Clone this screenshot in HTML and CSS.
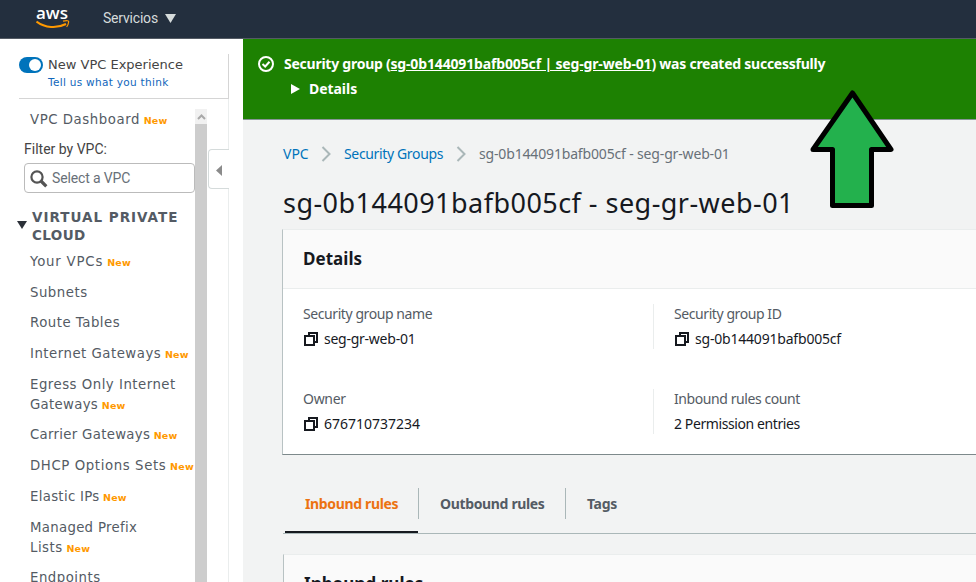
FILE: index.html
```html
<!DOCTYPE html>
<html lang="es">
<head>
<meta charset="utf-8">
<title>VPC - Security Groups</title>
<link rel="stylesheet" href="styles.css">
</head>
<body>
<header class="topbar">
  <div class="logo"><span>aws</span>
    <svg width="34" height="9" viewBox="0 0 34 9"><path d="M.5 1.500C9 8 21 8.600 30 4" fill="none" stroke="#f90" stroke-width="2"/><path d="M27 1.200C31 .2 33 .6 32.600 2.200C32.400 4 31.800 5.400 30.600 6.800" fill="none" stroke="#f90" stroke-width="1.200"/></svg>
  </div>
  <span class="services">Servicios</span>
  <svg class="caret" width="11" height="9" viewBox="0 0 11 9"><path d="M0 0H11L5.500 9Z" fill="#d5dbdb"/></svg>
</header>
<div class="shell">
  <aside class="sidebar">
    <div class="experience">
      <span class="toggle"></span>
      <div><div class="exp-title">New VPC Experience</div><div class="exp-link">Tell us what you think</div></div>
    </div>
    <div class="navwrap">
      <nav class="nav">
        <div class="item dash">VPC Dashboard <b>New</b></div>
        <div class="filter">Filter by VPC:</div>
        <div class="select"><svg width="18" height="18" viewBox="0 0 18 18" fill="none" stroke="#545454"><circle cx="7" cy="7" r="5.600" stroke-width="2.200"/><path d="M11 11L16.300 16.300" stroke-width="3.200"/></svg><span>Select a VPC</span></div>
        <div class="group"><svg width="10" height="8" viewBox="0 0 10 8"><path d="M0 0H10L5 8Z" fill="#2b3038"/></svg><div><div class="g1">VIRTUAL PRIVATE</div><div class="g2">CLOUD</div></div></div>
        <div class="items">
          <div class="item wide">Your VPCs <b>New</b></div>
          <div class="item">Subnets</div>
          <div class="item">Route Tables</div>
          <div class="item">Internet Gateways <b>New</b></div>
          <div class="item">Egress Only Internet<br><span class="snug">Gateways</span> <b>New</b></div>
          <div class="item snug">Carrier Gateways <b>New</b></div>
          <div class="item dhcp">DHCP Options Sets <b>New</b></div>
          <div class="item snug">Elastic IPs <b>New</b></div>
          <div class="item"><span class="snug">Managed Prefix</span><br>Lists <b>New</b></div>
          <div class="item">Endpoints</div>
        </div>
      </nav>
      <div class="scroll"><div class="up"><svg width="9" height="6" viewBox="0 0 9 6"><path d="M1 5L4.500 1.500L8 5" fill="none" stroke="#a9a9a9" stroke-width="2"/></svg></div></div>
      <div class="rail"><div class="collapse"><svg width="6" height="11" viewBox="0 0 6 11"><path d="M6 0V11L0 5.500Z" fill="#8b8b8b"/></svg></div></div>
    </div>
  </aside>
  <main class="main">
    <section class="flash">
      <svg class="ok" width="16" height="16" viewBox="0 0 16 16" fill="none" stroke="#fff" stroke-width="2"><circle cx="8" cy="8" r="7"/><path d="M4.500 8L7.200 10.500L11.500 5.800"/></svg>
      <div>
        <div class="msg">Security group (<u>sg-0b144091bafb005cf | seg-gr-web-01</u>) was created successfully</div>
        <div class="more"><svg width="9" height="10" viewBox="0 0 9 10"><path d="M0 0L9 5L0 10Z" fill="#fff"/></svg><span>Details</span></div>
      </div>
    </section>
    <div class="crumbs">
      <span class="c1">VPC</span>
      <svg width="10" height="16" viewBox="0 0 10 16"><path d="M1.500 1L8.500 8L1.500 15" fill="none" stroke="#aab7b8" stroke-width="2"/></svg>
      <span class="c2">Security Groups</span>
      <svg width="10" height="16" viewBox="0 0 10 16"><path d="M1.500 1L8.500 8L1.500 15" fill="none" stroke="#aab7b8" stroke-width="2"/></svg>
      <span class="c3">sg-0b144091bafb005cf - seg-gr-web-01</span>
    </div>
    <h1>sg-0b144091bafb005cf - seg-gr-web-01</h1>
    <section class="card">
      <h2>Details</h2>
      <div class="grid">
        <div class="cell"><div class="label">Security group name</div><div class="value"><svg width="14" height="14" viewBox="0 0 14 14" fill="none" stroke="#16191f" stroke-width="2"><path d="M1 4H10V13H1Z"/><path d="M5 4V1H13V10H10"/></svg><span class="v1">seg-gr-web-01</span></div></div>
        <div class="cell"><div class="label">Security group ID</div><div class="value"><svg width="14" height="14" viewBox="0 0 14 14" fill="none" stroke="#16191f" stroke-width="2"><path d="M1 4H10V13H1Z"/><path d="M5 4V1H13V10H10"/></svg><span class="v2">sg-0b144091bafb005cf</span></div></div>
        <div class="cell"><div class="label owner">Owner</div><div class="value"><svg width="14" height="14" viewBox="0 0 14 14" fill="none" stroke="#16191f" stroke-width="2"><path d="M1 4H10V13H1Z"/><path d="M5 4V1H13V10H10"/></svg><span>676710737234</span></div></div>
        <div class="cell"><div class="label">Inbound rules count</div><div class="value"><span class="v4">2 Permission entries</span></div></div>
      </div>
    </section>
    <div class="tabs"><div class="tab active">Inbound rules</div><div class="tab out">Outbound rules</div><div class="tab tags">Tags</div></div>
    <section class="card rules"><h2>Inbound rules</h2></section>
  </main>
</div>
<svg class="pointer" width="88" height="122" viewBox="0 0 88 122"><path d="M44.500 5L83 61.500H63.500V117.500H24.500V61.500H5Z" fill="#23b14d" stroke="#000" stroke-width="5" stroke-linejoin="round"/></svg>
</body>
</html>
```
FILE: styles.css
```css
* { box-sizing: border-box; }
html { overflow: hidden; }
body { margin: 0; width: 976px; height: 582px; overflow: hidden; background: #f2f3f3; color: #16191f; font: 14px/20px "Noto Sans", sans-serif; }
svg { display: block; flex: none; }
.topbar { height: 39px; display: flex; align-items: flex-start; background: #232f3e; border-bottom: 1px solid #545b64; color: #d5dbdb; padding-left: 36px; }
.logo { width: 34px; margin-right: 33px; }
.logo span { display: block; height: 20px; color: #fff; font: 600 17px/25px "Open Sans", sans-serif; }
.services { width: 62px; font: 14px/20px Roboto, sans-serif; letter-spacing: -.2px; margin-top: 8px; white-space: nowrap; }
.caret { margin: 14px 0 0; }
.shell { display: flex; height: 543px; overflow: hidden; }
.sidebar { width: 243px; flex: none; background: #fff; }
.experience { display: flex; width: 210px; height: 45px; margin: 15px 0 0 19px; border-right: 1px solid #d5d5d5; border-bottom: 1px solid #d5d5d5; font-family: "DejaVu Sans", sans-serif; white-space: nowrap; }
.toggle { width: 24px; height: 16px; margin: 3px 5px 0 0; padding: 2px 2px 2px 10px; border-radius: 8px; background: #0073bb; }
.toggle::before { content: ""; display: block; width: 12px; height: 12px; border-radius: 6px; background: #fff; }
.exp-title { font-size: 13px; line-height: 21px; color: #444; }
.exp-link { font-size: 10.5px; line-height: 14px; letter-spacing: .3px; color: #1166bb; }
.navwrap { display: flex; height: 483px; }
.nav { width: 195px; padding-top: 10px; overflow: hidden; }
.item { margin-left: 30px; font: 13.3px/20px "DejaVu Sans", sans-serif; letter-spacing: .5px; color: #545b64; white-space: nowrap; }
.item b { color: #f90; font-size: 9.5px; line-height: 1; letter-spacing: .2px; margin-left: -1px; }
.dash { padding-top: 1px; letter-spacing: .55px; }
.wide { letter-spacing: .8px; }
.snug { letter-spacing: .3px; }
.dhcp { letter-spacing: .6px; }
.filter { margin: 9px 0 0 24px; font: 14px/20px Roboto, sans-serif; color: #444; }
.select { display: flex; gap: 4px; width: 171px; height: 30px; margin: 4px 0 0 24px; padding: 6px 5px; border: 1px solid #bbb; border-radius: 4px; font: 14px/17px Roboto, sans-serif; letter-spacing: -.15px; color: #687078; }
.group { display: flex; gap: 5px; margin: 15px 0 8px 17px; font: bold 13.5px/18px "DejaVu Sans", sans-serif; letter-spacing: 1px; color: #545b64; white-space: nowrap; }
.g2 { letter-spacing: .4px; }
.group svg { margin-top: 13px; }
.items { display: grid; gap: 10.7px; }
.scroll { width: 12px; margin-top: 10px; background: #cdcdcd; }
.up { height: 15px; background: #f1f1f1; display: grid; place-items: center; }
.rail { width: 22px; border-right: 1px solid #eaeded; padding-top: 50px; }
.collapse { width: 21px; height: 40px; margin-left: 1px; border: 1px solid #d5dbdb; border-right: 0; border-radius: 4px 0 0 4px; padding: 15px 0 0 7px; background: #fff; }
.main { flex: 1; min-width: 0; }
.flash { height: 81px; display: flex; padding: 17px 0 0 15px; gap: 10px; background: #1d8102; border-bottom: 1px solid #879596; color: #fff; font-weight: bold; line-height: 16px; letter-spacing: -.25px; white-space: nowrap; }
.msg u { letter-spacing: -.15px; }
.more { display: flex; align-items: center; gap: 9px; margin: 9px 0 0 7px; letter-spacing: -.05px; }
.crumbs { display: flex; align-items: center; height: 20px; margin: 24px 0 0 40px; gap: 12px; color: #687078; white-space: nowrap; }
.c1, .c2 { color: #0073bb; }
.c1 { width: 26px; }
.c2 { width: 100px; margin-left: 1px; letter-spacing: -.35px; }
.c3 { letter-spacing: -.16px; margin-left: 1px; }
h1 { margin: 22px 0 0 40px; font-size: 27px; line-height: 34px; letter-spacing: .46px; font-weight: normal; white-space: nowrap; }
.card { margin: 9px 0 0 39px; width: 700px; height: 226px; background: #fff; border: 1px solid #eaeded; border-left-color: #b8c2c3; border-bottom-color: #7d898b; }
h2 { margin: 0; height: 59px; padding-left: 20px; background: #fafafa; border-bottom: 1px solid #eaeded; font-size: 17px; line-height: 58px; letter-spacing: .05px; }
.grid { display: grid; grid-template-columns: 370px 1fr; row-gap: 40px; padding-top: 15px; }
.cell { height: 45px; padding-left: 20px; line-height: 20px; white-space: nowrap; }
.cell:nth-child(even) { border-left: 1px solid #eaeded; }
.label { color: #545b64; letter-spacing: -.42px; }
.owner { letter-spacing: -.5px; }
.value { display: flex; align-items: center; gap: 6px; margin-top: 5px; }
.value svg { margin-left: 1px; }
.v1 { letter-spacing: -.25px; }
.v2 { letter-spacing: -.2px; }
.v4 { letter-spacing: -.4px; }
.tabs { display: flex; align-items: flex-start; height: 46px; margin: 33px 0 0 40px; border-bottom: 1px solid #aab7b8; color: #545b64; font-weight: bold; letter-spacing: -.35px; white-space: nowrap; }
.tab { height: 31px; line-height: 31px; padding-left: 21px; }
.active { width: 133px; height: 45px; margin-left: 2px; padding-left: 20px; color: #ec7211; border-bottom: 2px solid #16191f; }
.out { width: 148px; border: 1px solid #aab7b8; border-width: 0 1px; }
.rules { margin: 20px 0 0 40px; }
.owner { letter-spacing: -.3px; }
.pointer { position: absolute; left: 808px; top: 88px; }
```
